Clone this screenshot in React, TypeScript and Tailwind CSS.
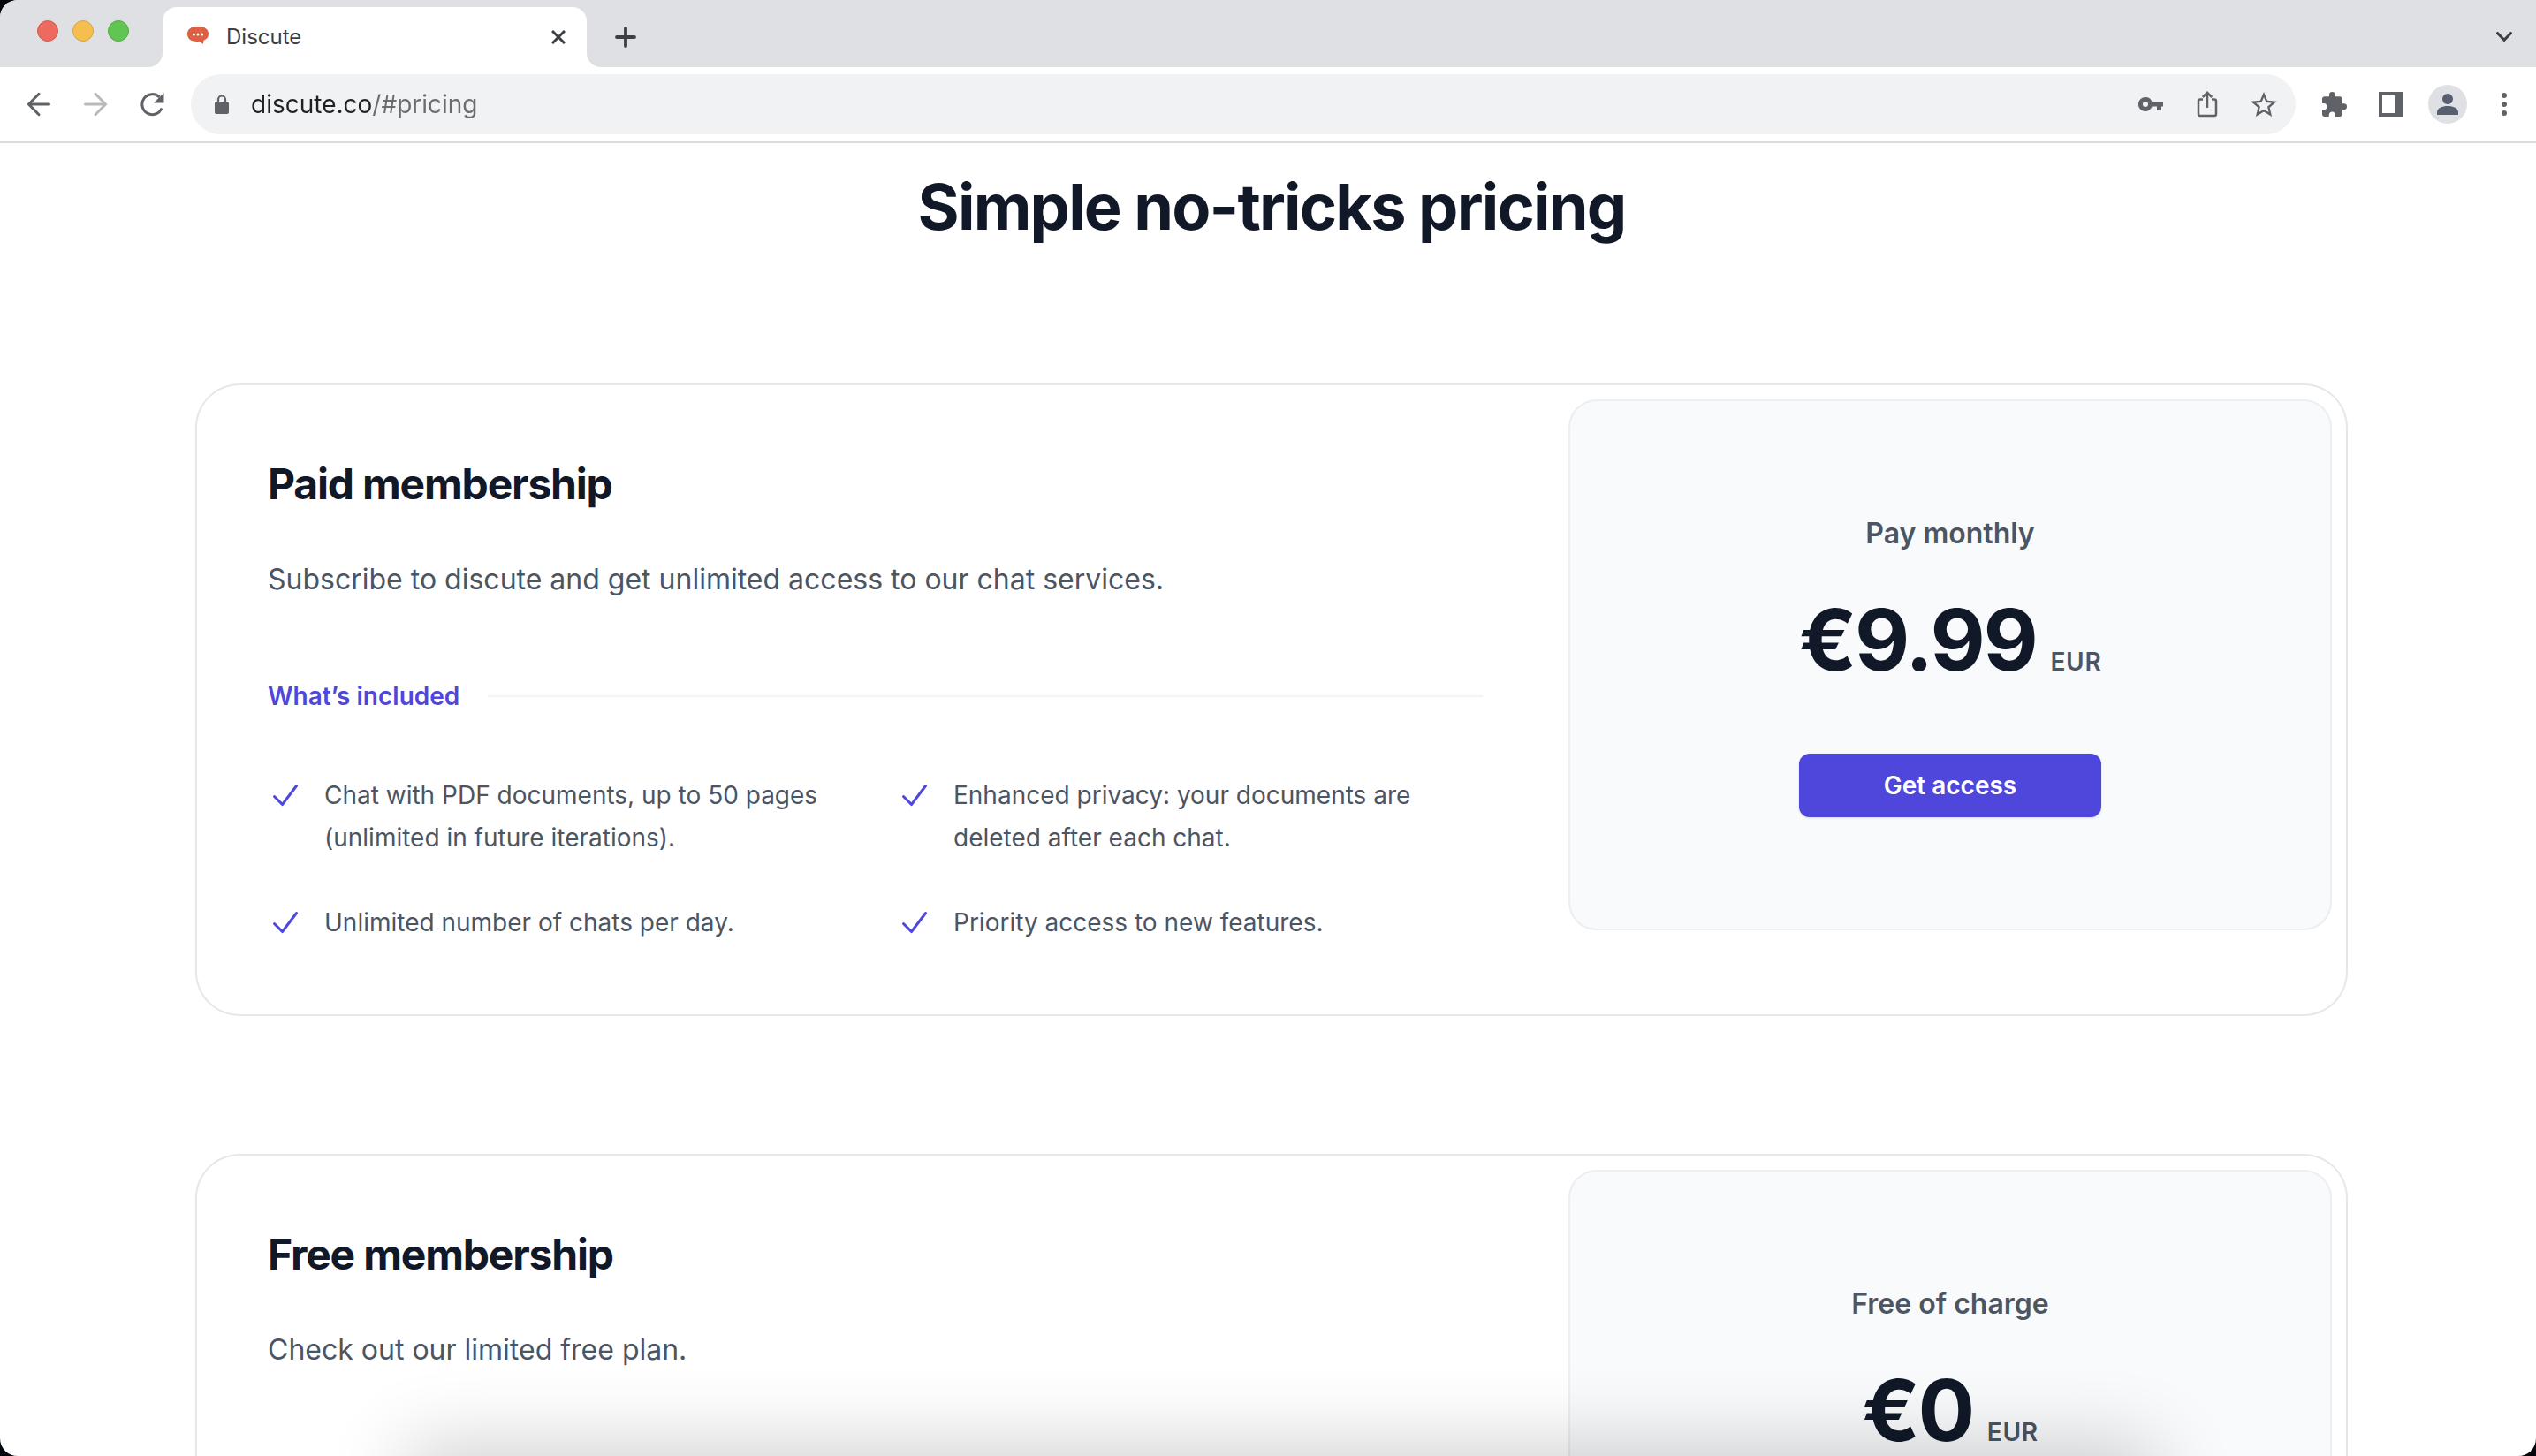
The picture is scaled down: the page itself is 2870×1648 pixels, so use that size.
import React from "react";

const paidFeatures = [
  "Chat with PDF documents, up to 50 pages (unlimited in future iterations).",
  "Enhanced privacy: your documents are deleted after each chat.",
  "Unlimited number of chats per day.",
  "Priority access to new features.",
];

function CheckIcon() {
  return (
    <svg viewBox="0 0 20 20" className="h-12 w-10 flex-none fill-[#4f46dc]" aria-hidden="true">
      <path
        fillRule="evenodd"
        clipRule="evenodd"
        d="M16.704 4.153a.75.75 0 01.143 1.052l-8 10.5a.75.75 0 01-1.127.075l-4.5-4.5a.75.75 0 011.06-1.06l3.894 3.893 7.48-9.817a.75.75 0 011.05-.143z"
      />
    </svg>
  );
}

function IconButton({ label, className, children }: { label: string; className?: string; children: React.ReactNode }) {
  return (
    <button type="button" aria-label={label} className={`flex flex-none items-center justify-center ${className ?? "size-10"}`}>
      {children}
    </button>
  );
}

function TabStrip() {
  return (
    <div className="flex h-[76px] items-end bg-[#dfe0e4] pr-4 pl-[42px] text-[#3c4043]">
      <div className="flex h-[76px] flex-none items-center gap-4 pb-[6px]">
        <button type="button" aria-label="Close window" className="size-6 rounded-full border border-[#d6574d] bg-[#ec6a5e]" />
        <button type="button" aria-label="Minimize window" className="size-6 rounded-full border border-[#dba33c] bg-[#f4bf4f]" />
        <button type="button" aria-label="Zoom window" className="size-6 rounded-full border border-[#51ac3c] bg-[#61c554]" />
      </div>
      <svg viewBox="0 0 16 16" className="ml-[22px] size-4 flex-none fill-white" aria-hidden="true">
        <path d="M16 0v16H0A16 16 0 0016 0z" />
      </svg>
      <div className="flex h-[68px] w-[480px] flex-none items-center rounded-t-2xl bg-white pr-5 pl-7">
        <svg viewBox="0 0 24 20" className="mb-1 h-5 w-6 flex-none" aria-hidden="true">
          <path
            fill="#de6040"
            d="M11 0h2c7 0 11 3.500 11 8.500 0 3.500-2 6-5.500 7.300L18 20l-4.500-3.200c-1 .2-1.500.2-2.500.2C4 17 0 13.500 0 8.500S4 0 11 0z"
          />
          <circle cx="7.300" cy="9" r="1.500" fill="#fff" />
          <circle cx="12" cy="9" r="1.500" fill="#fff" />
          <circle cx="16.700" cy="9" r="1.500" fill="#fff" />
        </svg>
        <span className="ml-5 flex-1 text-2xl">Discute</span>
        <IconButton label="Close tab" className="size-6">
          <svg viewBox="0 0 16 16" className="size-4" fill="none" stroke="currentColor" strokeWidth="3" aria-hidden="true">
            <path d="M1 1l14 14M15 1L1 15" />
          </svg>
        </IconButton>
      </div>
      <svg viewBox="0 0 16 16" className="size-4 flex-none fill-white" aria-hidden="true">
        <path d="M0 0v16h16A16 16 0 010 0z" />
      </svg>
      <IconButton label="New tab" className="mb-[14px] ml-2 size-10">
        <svg viewBox="0 0 24 24" className="size-6" fill="none" stroke="currentColor" strokeWidth="3.800" strokeLinecap="round" aria-hidden="true">
          <path d="M12 2v20M2 12h20" />
        </svg>
      </IconButton>
      <div className="flex-1" />
      <IconButton label="Search tabs" className="mb-[14px] size-10">
        <svg viewBox="0 0 18 12" className="h-3 w-[18px]" fill="none" stroke="currentColor" strokeWidth="3" strokeLinecap="round" aria-hidden="true">
          <path d="M1.500 1.500L9 9.300l7.500-7.800" />
        </svg>
      </IconButton>
    </div>
  );
}

function Toolbar() {
  return (
    <div className="flex h-[86px] items-center border-b-2 border-[#dadcdf] bg-white pr-4 pl-6 text-[#5f6368]">
      <IconButton label="Back">
        <svg viewBox="0 0 28 28" className="size-7" fill="none" stroke="currentColor" strokeWidth="3" strokeLinecap="round" aria-hidden="true">
          <path d="M25.500 14H2.500M14 2.300L2.500 14 14 25.700" />
        </svg>
      </IconButton>
      <IconButton label="Forward" className="ml-6 size-10">
        <svg viewBox="0 0 28 28" className="size-7 text-[#bababa]" fill="none" stroke="currentColor" strokeWidth="3" strokeLinecap="round" aria-hidden="true">
          <path d="M2.500 14h23M14 2.300L25.500 14 14 25.700" />
        </svg>
      </IconButton>
      <IconButton label="Reload" className="ml-6 size-10">
        <svg viewBox="0 0 28 28" className="size-7" aria-hidden="true">
          <path d="M25 18.500a11.500 11.500 0 11-2.600-12.600" fill="none" stroke="currentColor" strokeWidth="3" />
          <path d="M27.500 1v11.500H16z" fill="currentColor" />
        </svg>
      </IconButton>
      <div className="ml-6 flex h-[68px] flex-1 items-center rounded-full bg-[#f1f2f4] pr-4 pl-[26px]">
        <svg viewBox="0 0 18 22" className="h-[22px] w-[18px] flex-none" aria-hidden="true">
          <rect x="1" y="8" width="16" height="14" rx="2" fill="currentColor" />
          <path d="M5 9V5.500a4 4 0 018 0V9" fill="none" stroke="currentColor" strokeWidth="2.200" />
        </svg>
        <input
          type="text"
          aria-label="Address and search bar"
          defaultValue="discute.co/#pricing"
          spellCheck={false}
          className="ml-6 min-w-0 flex-1 bg-[linear-gradient(to_right,#202124_137px,#6b6c6f_137px)] bg-clip-text text-[28px] text-transparent outline-none"
        />
        <IconButton label="Saved passwords">
          <svg viewBox="0 0 28 16" className="h-4 w-7" fill="currentColor" aria-hidden="true">
            <path fillRule="evenodd" d="M8 0a8 8 0 017.500 5.300H28v5.200h-2V15h-5v-4.500h-5.500A8 8 0 118 0zm0 5a3 3 0 100 6 3 3 0 000-6z" />
          </svg>
        </IconButton>
        <IconButton label="Share" className="ml-6 size-10">
          <svg viewBox="0 0 24 30" className="h-[30px] w-6" fill="none" stroke="currentColor" strokeWidth="2.500" aria-hidden="true">
            <path d="M7 9.500H4a2 2 0 00-2 2V26a2 2 0 002 2h16a2 2 0 002-2V11.500a2 2 0 00-2-2h-3M12 19V2M6.800 7L12 1.800 17.200 7" />
          </svg>
        </IconButton>
        <IconButton label="Bookmark this tab" className="ml-6 size-10">
          <svg viewBox="2 2 20 19" className="h-7 w-[30px]" fill="currentColor" aria-hidden="true">
            <path d="M22 9.240l-7.190-.62L12 2 9.190 8.630 2 9.240l5.460 4.730L5.820 21 12 17.270 18.180 21l-1.630-7.030L22 9.240zM12 15.400l-3.760 2.270 1-4.280-3.320-2.880 4.380-.38L12 6.100l1.710 4.040 4.380.38-3.320 2.880 1 4.280L12 15.400z" />
          </svg>
        </IconButton>
      </div>
      <IconButton label="Extensions" className="ml-6 size-10">
        <svg viewBox="2 1 21 21" className="size-7" fill="currentColor" aria-hidden="true">
          <path d="M20.500 11H19V7c0-1.100-.9-2-2-2h-4V3.500a2.500 2.500 0 00-5 0V5H4c-1.100 0-1.990.9-1.990 2v3.800H3.500c1.490 0 2.700 1.210 2.700 2.700s-1.210 2.700-2.700 2.700H2V20c0 1.100.9 2 2 2h3.800v-1.500c0-1.490 1.210-2.700 2.700-2.700s2.700 1.210 2.700 2.700V22H17c1.100 0 2-.9 2-2v-4h1.500a2.500 2.500 0 000-5z" />
        </svg>
      </IconButton>
      <IconButton label="Side panel" className="ml-6 size-10">
        <svg viewBox="0 0 28 28" className="size-7" fill="currentColor" aria-hidden="true">
          <path fillRule="evenodd" d="M0 0h28v28H0zM4 4v20h14V4z" />
        </svg>
      </IconButton>
      <IconButton label="Profile" className="mx-[22px] size-11 rounded-full bg-[#dfe0e4]">
        <svg viewBox="0 0 24 24" className="size-6" fill="#565e70" aria-hidden="true">
          <circle cx="12" cy="6" r="6" />
          <path d="M0 24v-3c0-4.500 6-7 12-7s12 2.500 12 7v3z" />
        </svg>
      </IconButton>
      <IconButton label="Menu">
        <svg viewBox="0 0 6 26" className="h-[26px] w-[6px]" fill="currentColor" aria-hidden="true">
          <circle cx="3" cy="3" r="3" />
          <circle cx="3" cy="13" r="3" />
          <circle cx="3" cy="23" r="3" />
        </svg>
      </IconButton>
    </div>
  );
}

interface PlanProps {
  title: string;
  description: string;
  billing: string;
  price: string;
  features?: string[];
  action?: string;
}

function PlanCard({ title, description, billing, price, features, action }: PlanProps) {
  return (
    <section className="flex rounded-[48px] ring-2 ring-[#e5e7eb]">
      <div className="flex-auto p-20">
        <h2 className="text-5xl leading-16 font-bold tracking-tight text-[#111827]">{title}</h2>
        <p className="mt-12 text-[32px] leading-14 text-[#4b5563]">{description}</p>
        {features && (
          <>
            <div className="mt-20 flex items-center gap-x-8">
              <h3 className="flex-none text-[28px] leading-12 font-semibold text-[#4f46dc]">What’s included</h3>
              <div className="h-[2px] flex-auto bg-[#f3f4f6]" />
            </div>
            <ul className="mt-16 grid grid-cols-2 gap-12 text-[28px] leading-12 text-[#4b5563]">
              {features.map((feature) => (
                <li key={feature} className="flex gap-x-6">
                  <CheckIcon />
                  {feature}
                </li>
              ))}
            </ul>
          </>
        )}
      </div>
      <div className="w-full max-w-4xl flex-none p-4">
        <div className="flex flex-col items-center rounded-[32px] bg-[#f9fafc] py-32 text-center inset-ring-2 inset-ring-[#edeef1]">
          <div>
            <p className="text-[32px] leading-12 font-semibold text-[#4b5563]">{billing}</p>
            <p className="mt-12 flex items-baseline justify-center gap-x-4">
              <span className="text-8xl leading-none font-bold tracking-tight text-[#111827]">{price}</span>
              <span className="text-[28px] leading-12 font-semibold tracking-wide text-[#4b5563]">EUR</span>
            </p>
            {action && (
              <button type="button" className="mt-20 block w-full rounded-xl bg-[#4f46dc] px-6 py-4 text-[28px] leading-10 font-semibold text-white shadow-sm">
                {action}
              </button>
            )}
          </div>
        </div>
      </div>
    </section>
  );
}

export default function App() {
  return (
    <div className="h-screen overflow-hidden bg-[#05070f] font-['Inter',sans-serif]">
      <div className="relative flex h-full flex-col overflow-hidden rounded-tl-[20px] rounded-b-[20px] bg-white">
        <TabStrip />
        <Toolbar />
        <main className="min-h-0 flex-1 overflow-hidden pl-2">
          <div className="mx-auto max-w-[2432px] pt-8">
            <h1 className="text-center text-7xl leading-20 font-bold tracking-tight text-[#111827]">Simple no-tricks pricing</h1>
            <div className="mt-[162px] flex flex-col gap-40">
              <PlanCard
                title="Paid membership"
                description="Subscribe to discute and get unlimited access to our chat services."
                billing="Pay monthly"
                price="€9.99"
                features={paidFeatures}
                action="Get access"
              />
              <PlanCard title="Free membership" description="Check out our limited free plan." billing="Free of charge" price="€0" />
            </div>
          </div>
        </main>
        <div className="pointer-events-none absolute top-full right-[440px] left-[470px] h-20 shadow-[0_0_90px_10px_rgba(0,0,0,0.2)]" />
      </div>
    </div>
  );
}
